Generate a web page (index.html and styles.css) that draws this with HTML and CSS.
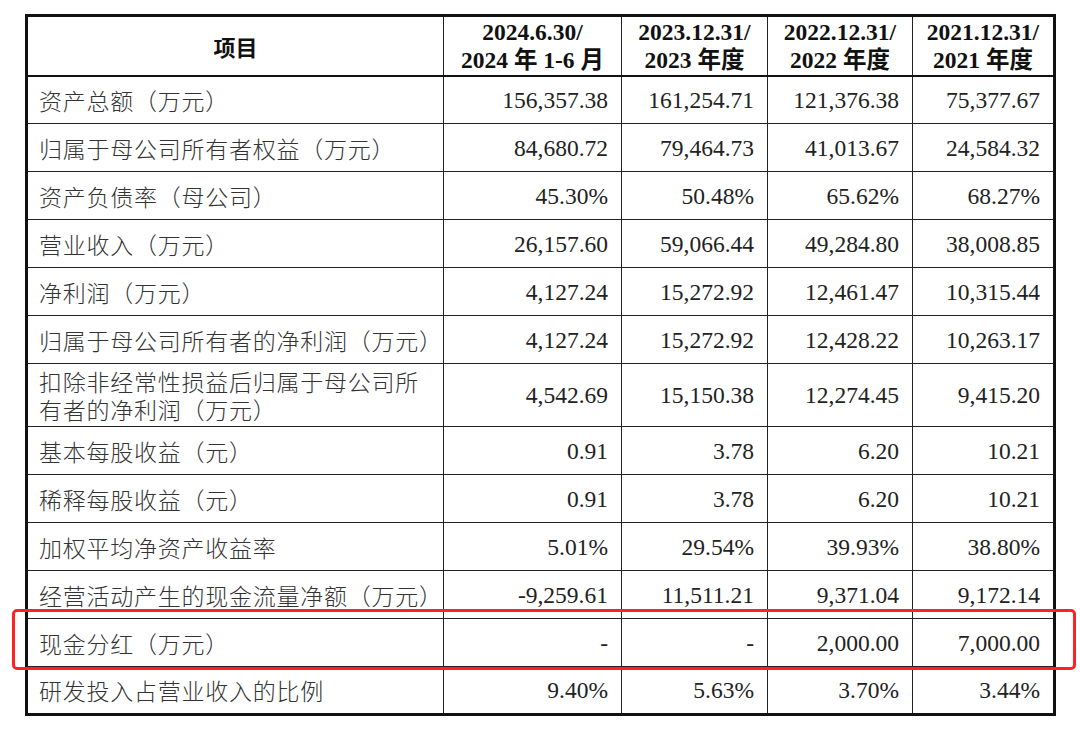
FILE: index.html
```html
<!DOCTYPE html>
<html lang="zh-CN">
<head>
<meta charset="utf-8">
<title>主要财务指标</title>
<link rel="stylesheet" href="styles.css">
</head>
<body>
<div class="page">
  <table class="fin">
    <colgroup>
      <col class="c1"><col class="c2"><col class="c3"><col class="c4"><col class="c5">
    </colgroup>
    <thead>
      <tr class="head">
        <th class="item">项目</th>
        <th>2024.6.30/<br>2024 年 1-6 月</th>
        <th>2023.12.31/<br>2023 年度</th>
        <th>2022.12.31/<br>2022 年度</th>
        <th>2021.12.31/<br>2021 年度</th>
      </tr>
    </thead>
    <tbody>
      <tr><td class="lab">资产总额（万元）</td><td>156,357.38</td><td>161,254.71</td><td>121,376.38</td><td>75,377.67</td></tr>
      <tr><td class="lab">归属于母公司所有者权益（万元）</td><td>84,680.72</td><td>79,464.73</td><td>41,013.67</td><td>24,584.32</td></tr>
      <tr><td class="lab">资产负债率（母公司）</td><td>45.30%</td><td>50.48%</td><td>65.62%</td><td>68.27%</td></tr>
      <tr><td class="lab">营业收入（万元）</td><td>26,157.60</td><td>59,066.44</td><td>49,284.80</td><td>38,008.85</td></tr>
      <tr><td class="lab">净利润（万元）</td><td>4,127.24</td><td>15,272.92</td><td>12,461.47</td><td>10,315.44</td></tr>
      <tr><td class="lab">归属于母公司所有者的净利润（万元）</td><td>4,127.24</td><td>15,272.92</td><td>12,428.22</td><td>10,263.17</td></tr>
      <tr class="tall"><td class="lab">扣除非经常性损益后归属于母公司所有者的净利润（万元）</td><td>4,542.69</td><td>15,150.38</td><td>12,274.45</td><td>9,415.20</td></tr>
      <tr><td class="lab">基本每股收益（元）</td><td>0.91</td><td>3.78</td><td>6.20</td><td>10.21</td></tr>
      <tr><td class="lab">稀释每股收益（元）</td><td>0.91</td><td>3.78</td><td>6.20</td><td>10.21</td></tr>
      <tr><td class="lab">加权平均净资产收益率</td><td>5.01%</td><td>29.54%</td><td>39.93%</td><td>38.80%</td></tr>
      <tr><td class="lab">经营活动产生的现金流量净额（万元）</td><td>-9,259.61</td><td>11,511.21</td><td>9,371.04</td><td>9,172.14</td></tr>
      <tr><td class="lab">现金分红（万元）</td><td>-</td><td>-</td><td>2,000.00</td><td>7,000.00</td></tr>
      <tr><td class="lab">研发投入占营业收入的比例</td><td>9.40%</td><td>5.63%</td><td>3.70%</td><td>3.44%</td></tr>
    </tbody>
  </table>
  <div class="mark"></div>
</div>
</body>
</html>
```

FILE: styles.css
```css
html, body {
  margin: 0;
  padding: 0;
  background: #ffffff;
}

.page {
  position: relative;
  padding: 14px 0 0 25px;
  width: 1080px;
  height: 739px;
  box-sizing: border-box;
}

.fin {
  border-collapse: collapse;
  table-layout: fixed;
  width: 1028px;
  border: 3px solid #111;
  font-family: "Liberation Serif", "Noto Sans CJK SC", serif;
  font-size: 23.5px;
  color: #222;
}

.c1 { width: 417px; }
.c2 { width: 178px; }
.c3 { width: 146px; }
.c4 { width: 145px; }
.c5 { width: 142px; }

.fin th,
.fin td {
  border: 1px solid #222;
  padding: 0 13px 0 12px;
  vertical-align: middle;
}

.fin th {
  font-weight: bold;
  text-align: center;
  line-height: 28px;
  color: #111;
  padding: 0 4px;
  border-bottom: 2px solid #111;
}

.fin th.item {
  font-family: "Noto Sans CJK SC", sans-serif;
  font-size: 22px;
  font-weight: 700;
}

.head { height: 60px; }

.fin tbody tr { height: 48px; }
.fin tbody tr.tall { height: 63px; }

.fin td {
  text-align: right;
  line-height: 28px;
  white-space: nowrap;
}

.fin td.lab {
  text-align: left;
  white-space: normal;
  font-family: "Noto Sans CJK SC", sans-serif;
  font-weight: 300;
  font-size: 23px;
  letter-spacing: 0.75px;
  color: #333;
  padding-left: 11px;
  padding-right: 8px;
}

.mark {
  position: absolute;
  left: 12px;
  top: 609px;
  width: 1064px;
  height: 61px;
  box-sizing: border-box;
  border: 3.5px solid #f22;
  border-radius: 5px;
}
```
